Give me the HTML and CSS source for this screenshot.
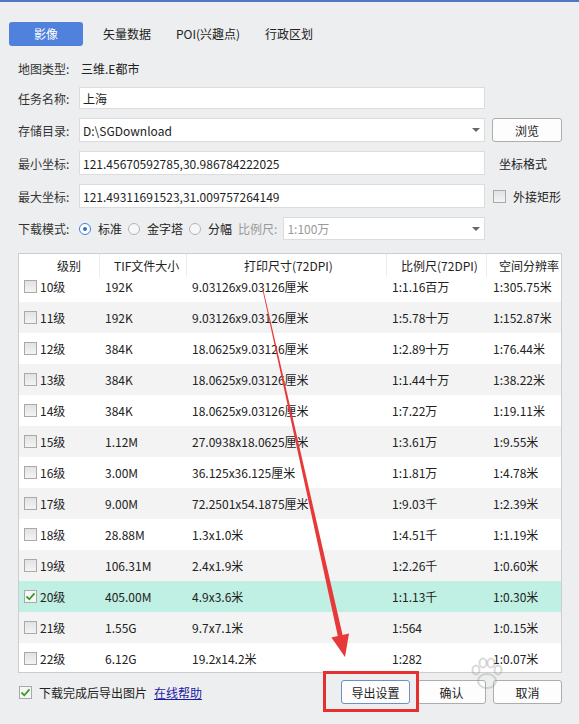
FILE: index.html
```html
<!DOCTYPE html>
<html lang="zh">
<head>
<meta charset="utf-8">
<title>下载设置</title>
<link rel="stylesheet" href="styles.css">
</head>
<body>
<div class="win">
  <div class="topbar"></div>
  <div class="tabs">
    <div class="tab active">影像</div>
    <div class="tab">矢量数据</div>
    <div class="tab">POI(兴趣点)</div>
    <div class="tab">行政区划</div>
  </div>

  <div class="form">
    <div class="lbl r1">地图类型:</div>
    <div class="val r1">三维.E都市</div>
    <div class="side r1"></div>

    <div class="lbl">任务名称:</div>
    <div class="input">上海</div>
    <div class="side"></div>

    <div class="lbl">存储目录:</div>
    <div class="input">D:\SGDownload<span class="caret"></span></div>
    <div class="side"><div class="btn">浏览</div></div>

    <div class="lbl">最小坐标:</div>
    <div class="input">121.45670592785,30.986784222025</div>
    <div class="side"><span class="fmt">坐标格式</span></div>

    <div class="lbl">最大坐标:</div>
    <div class="input">121.49311691523,31.009757264149</div>
    <div class="side"><span class="cb"></span><span class="cbtext">外接矩形</span></div>

    <div class="lbl">下载模式:</div>
    <div class="mode">
      <span class="radio on"></span><span class="rtext">标准</span>
      <span class="radio"></span><span class="rtext">金字塔</span>
      <span class="radio"></span><span class="rtext">分幅</span>
      <span class="gray">比例尺:</span>
      <div class="input dis">1:100万<span class="caret"></span></div>
    </div>
    <div class="side"></div>
  </div>

  <div class="table">
    <div class="thead">
      <div class="th c1">级别</div>
      <div class="th c2">TIF文件大小</div>
      <div class="th c3">打印尺寸(72DPI)</div>
      <div class="th c4">比例尺(72DPI)</div>
      <div class="th c5">空间分辨率</div>
    </div>
    <div class="tbody">
      <div class="tr first"><div class="td c1"><span class="cb"></span>10级</div><div class="td c2">192K</div><div class="td c3">9.03126x9.03126厘米</div><div class="td c4">1:1.16百万</div><div class="td c5">1:305.75米</div></div>
      <div class="tr alt"><div class="td c1"><span class="cb"></span>11级</div><div class="td c2">192K</div><div class="td c3">9.03126x9.03126厘米</div><div class="td c4">1:5.78十万</div><div class="td c5">1:152.87米</div></div>
      <div class="tr"><div class="td c1"><span class="cb"></span>12级</div><div class="td c2">384K</div><div class="td c3">18.0625x9.03126厘米</div><div class="td c4">1:2.89十万</div><div class="td c5">1:76.44米</div></div>
      <div class="tr alt"><div class="td c1"><span class="cb"></span>13级</div><div class="td c2">384K</div><div class="td c3">18.0625x9.03126厘米</div><div class="td c4">1:1.44十万</div><div class="td c5">1:38.22米</div></div>
      <div class="tr"><div class="td c1"><span class="cb"></span>14级</div><div class="td c2">384K</div><div class="td c3">18.0625x9.03126厘米</div><div class="td c4">1:7.22万</div><div class="td c5">1:19.11米</div></div>
      <div class="tr alt"><div class="td c1"><span class="cb"></span>15级</div><div class="td c2">1.12M</div><div class="td c3">27.0938x18.0625厘米</div><div class="td c4">1:3.61万</div><div class="td c5">1:9.55米</div></div>
      <div class="tr"><div class="td c1"><span class="cb"></span>16级</div><div class="td c2">3.00M</div><div class="td c3">36.125x36.125厘米</div><div class="td c4">1:1.81万</div><div class="td c5">1:4.78米</div></div>
      <div class="tr alt"><div class="td c1"><span class="cb"></span>17级</div><div class="td c2">9.00M</div><div class="td c3">72.2501x54.1875厘米</div><div class="td c4">1:9.03千</div><div class="td c5">1:2.39米</div></div>
      <div class="tr"><div class="td c1"><span class="cb"></span>18级</div><div class="td c2">28.88M</div><div class="td c3">1.3x1.0米</div><div class="td c4">1:4.51千</div><div class="td c5">1:1.19米</div></div>
      <div class="tr alt"><div class="td c1"><span class="cb"></span>19级</div><div class="td c2">106.31M</div><div class="td c3">2.4x1.9米</div><div class="td c4">1:2.26千</div><div class="td c5">1:0.60米</div></div>
      <div class="tr sel"><div class="td c1"><span class="cb on"><svg viewBox="0 0 13 13" width="13" height="13"><path d="M2.5 6.5 L5.3 9.3 L10.5 3.3" fill="none" stroke="#3a9a2a" stroke-width="1.8"/></svg></span>20级</div><div class="td c2">405.00M</div><div class="td c3">4.9x3.6米</div><div class="td c4">1:1.13千</div><div class="td c5">1:0.30米</div></div>
      <div class="tr alt"><div class="td c1"><span class="cb"></span>21级</div><div class="td c2">1.55G</div><div class="td c3">9.7x7.1米</div><div class="td c4">1:564</div><div class="td c5">1:0.15米</div></div>
      <div class="tr"><div class="td c1"><span class="cb"></span>22级</div><div class="td c2">6.12G</div><div class="td c3">19.2x14.2米</div><div class="td c4">1:282</div><div class="td c5">1:0.07米</div></div>
    </div>
  </div>

  <div class="bottom">
    <div class="opt">
      <span class="cb on"><svg viewBox="0 0 13 13" width="13" height="13"><path d="M2.5 6.5 L5.3 9.3 L10.5 3.3" fill="none" stroke="#3a9a2a" stroke-width="1.8"/></svg></span>
      <span class="opttext">下载完成后导出图片</span>
      <a class="link" href="#">在线帮助</a>
    </div>
    <div class="btns">
      <div class="btn focus">导出设置</div>
      <div class="btn">确认</div>
      <div class="btn">取消</div>
    </div>
  </div>

  <svg class="paw" viewBox="0 0 40 40" width="40" height="40">
    <g fill="none" stroke="rgba(150,150,150,0.35)" stroke-width="2">
      <ellipse cx="20" cy="27" rx="9" ry="7"/>
      <ellipse cx="9" cy="16" rx="3.5" ry="4.5"/>
      <ellipse cx="16" cy="9" rx="3.5" ry="4.5"/>
      <ellipse cx="24" cy="9" rx="3.5" ry="4.5"/>
      <ellipse cx="31" cy="16" rx="3.5" ry="4.5"/>
    </g>
  </svg>
  <div class="redbox"></div>
  <svg class="arrow" viewBox="0 0 579 724" width="579" height="724">
    <polygon points="263.4,289.9 262.6,290.1 337.8,636 331.4,637.6 345,657 349,633.4 342.6,635" fill="#e8393a"/>
  </svg>
</div>
</body>
</html>
```

FILE: styles.css
```css
* { box-sizing: border-box; }
html, body {
  margin: 0;
  padding: 0;
}
body {
  width: 579px;
  height: 724px;
  overflow: hidden;
  background: #edeeef;
  font-family: "Noto Sans CJK SC", "Microsoft YaHei", "Noto Sans", sans-serif;
  font-size: 12px;
  color: #222;
}
.win {
  position: relative;
  width: 579px;
  height: 724px;
}
.topbar {
  height: 2px;
  background: #4c78c4;
}
.tabs {
  display: flex;
  gap: 7px;
  margin: 20px 0 0 9px;
  height: 24px;
}
.tab {
  width: 74px;
  height: 24px;
  line-height: 24px;
  text-align: center;
  color: #222;
  border-radius: 3px;
}
.tab.active {
  background: #5082dd;
  color: #fff;
}
.form {
  display: grid;
  grid-template-columns: 61px 406px 77px;
  grid-template-rows: 20px 22px 24px 24px 24px 23px;
  column-gap: 0;
  row-gap: 9px;
  margin: 12px 0 0 18px;
}
.lbl, .val {
  display: flex;
  align-items: center;
  color: #333;
  white-space: nowrap;
}
.val { color: #222; padding-left: 2px; }
.input {
  position: relative;
  background: #fff;
  border: 1px solid #dcdcdc;
  display: flex;
  align-items: center;
  padding-left: 3px;
  color: #222;
  white-space: nowrap;
}
.input.dis { color: #999; flex: 1; height: 23px; }
.caret {
  position: absolute;
  right: 4px;
  top: 50%;
  margin-top: -2px;
  width: 0;
  height: 0;
  border-left: 4px solid transparent;
  border-right: 4px solid transparent;
  border-top: 4px solid #666;
}
.side {
  display: flex;
  align-items: center;
  padding-left: 7px;
}
.btn {
  width: 70px;
  height: 24px;
  border: 1px solid #adadad;
  border-radius: 3px;
  background: #fdfdfd;
  display: flex;
  align-items: center;
  justify-content: center;
  color: #222;
}
.btn.focus { border-color: #6e8fc8; }
.fmt { padding-left: 7px; }
.cb {
  display: inline-block;
  width: 13px;
  height: 13px;
  border: 1px solid #a9a9a9;
  background: linear-gradient(#e2e2e2, #f4f4f4);
  flex: none;
  position: relative;
}
.cb svg { position: absolute; left: -1px; top: -1px; }
.cb.on { background: #f6f6f6; }
.side .cb { margin-left: 1px; }
.cbtext { margin-left: 7px; }
.mode {
  display: flex;
  align-items: center;
  white-space: nowrap;
}
.radio {
  width: 12px;
  height: 12px;
  border-radius: 50%;
  border: 1px solid #b5b5b5;
  background: #f7f7f7;
  flex: none;
  position: relative;
}
.radio.on { border-color: #3f7fd6; background: #fff; }
.radio.on::after {
  content: "";
  position: absolute;
  left: 3px;
  top: 3px;
  width: 4px;
  height: 4px;
  border-radius: 50%;
  background: #2f6fcf;
}
.rtext { margin: 0 6px 0 7px; }
.gray { color: #999; margin: 0 6px 0 0; }

.table {
  margin: 13px 0 0 18px;
  width: 544px;
  height: 420px;
  border: 1px solid #cdcdcd;
  background: #fff;
  overflow: hidden;
}
.thead {
  display: flex;
  height: 23px;
  background: #fff;
}
.th {
  height: 23px;
  line-height: 23px;
  white-space: nowrap;
  color: #222;
  border-right: 1px solid #ececec;
  overflow: hidden;
}
.th.c5 { border-right: none; }
.c1 { width: 81px; flex: none; }
.c2 { width: 87px; flex: none; }
.c3 { width: 200px; flex: none; }
.c4 { width: 100px; flex: none; }
.c5 { flex: 1; min-width: 0; }
.th.c1 { padding-left: 38px; }
.th.c2 { padding-left: 14px; }
.th.c3 { padding-left: 57px; }
.th.c4 { padding-left: 14px; }
.th.c5 { padding-left: 12px; }

.tr {
  display: flex;
  height: 31px;
  align-items: center;
  background: #fff;
}
.tr.first { height: 25px; padding-bottom: 6px; }
.tr.alt { background: #f3f3f3; }
.tr.sel { background: #c0efe3; }
.td {
  white-space: nowrap;
  overflow: hidden;
  display: flex;
  align-items: center;
}
.td.c1 { padding-left: 5px; }
.td.c1 .cb { margin-right: 3px; }
.td.c2 { padding-left: 5px; }
.td.c3 { padding-left: 5px; }
.td.c4 { padding-left: 5px; }
.td.c5 { padding-left: 6px; }

.bottom {
  display: flex;
  justify-content: space-between;
  align-items: center;
  margin: 7px 17px 0 19px;
  height: 24px;
}
.opt { display: flex; align-items: center; }
.opttext { margin-left: 7px; }
.link {
  margin-left: 7px;
  color: #1a1aa6;
  text-decoration: underline;
}
.btns { display: flex; gap: 7px; }
.btns .btn { width: 69px; }

.redbox {
  position: absolute;
  left: 323px;
  top: 671px;
  width: 96px;
  height: 41px;
  border: 3px solid #e5302f;
}
.arrow {
  position: absolute;
  left: 0;
  top: 0;
  pointer-events: none;
}
.paw {
  position: absolute;
  left: 467px;
  top: 654px;
  pointer-events: none;
}
```
